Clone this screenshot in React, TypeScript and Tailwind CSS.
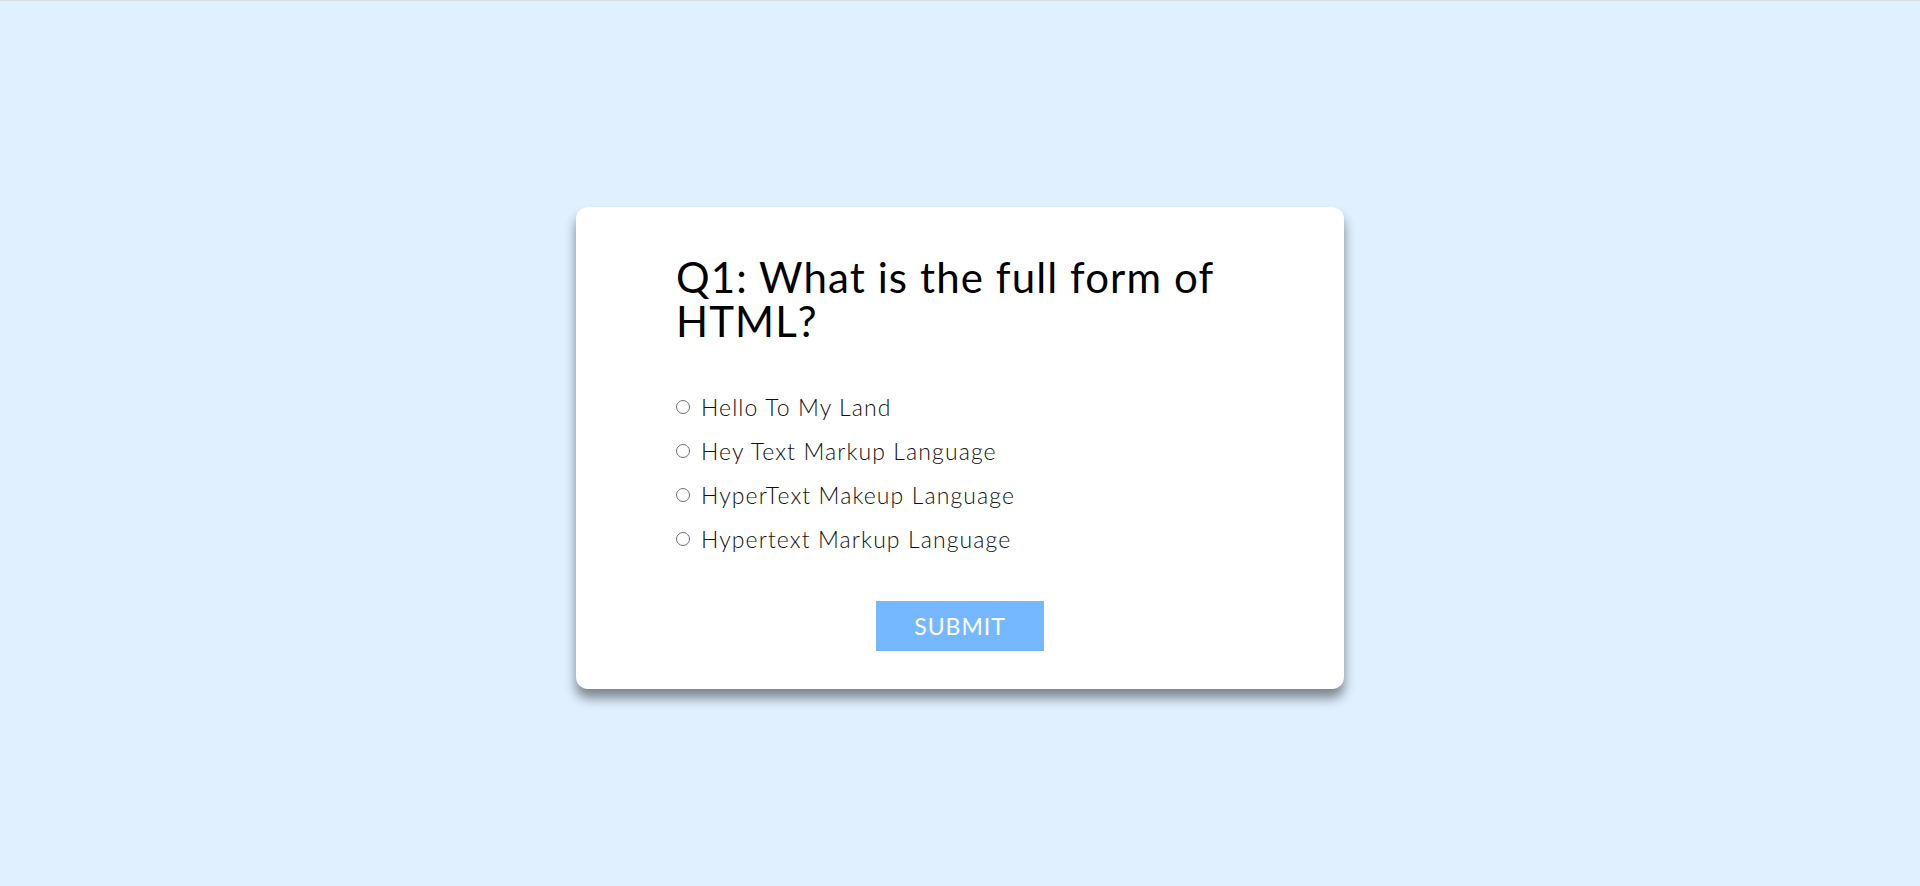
import React from "react";

const options = [
  "Hello To My Land",
  "Hey Text Markup Language",
  "HyperText Makeup Language",
  "Hypertext Markup Language",
];

export default function App() {
  return (
    <div
      className="w-full h-[886px] bg-[#e0f0ff] border-t border-[#d4dbe2] flex items-center justify-center pt-[9px]"
      style={{ fontFamily: "Lato, 'Noto Sans', sans-serif" }}
    >
      <div className="w-[768px] h-[482px] bg-white rounded-[12px] shadow-[0_9px_12px_rgba(0,0,0,0.45)] flex flex-col pt-[48px] pb-[38px] px-[100px]">
        <h1 className="text-[42px] leading-[44px] text-black font-normal tracking-[1.1px]">
          Q1: What is the full form of HTML?
        </h1>
        <ul className="mt-[49px] flex flex-col gap-[14px]">
          {options.map((o) => (
            <li key={o} className="flex items-center h-[30px]">
              <span className="w-[14px] h-[14px] rounded-full border border-[#6f6f6f] mr-[11px] bg-white" />
              <span className="text-[23px] font-light text-[#111] tracking-[1.1px]">{o}</span>
            </li>
          ))}
        </ul>
        <div className="flex-1" />
        <div className="flex justify-center">
          <button className="w-[168px] h-[50px] bg-[#76b8ff] text-white text-[23px] tracking-[1px] uppercase">
            Submit
          </button>
        </div>
      </div>
    </div>
  );
}
